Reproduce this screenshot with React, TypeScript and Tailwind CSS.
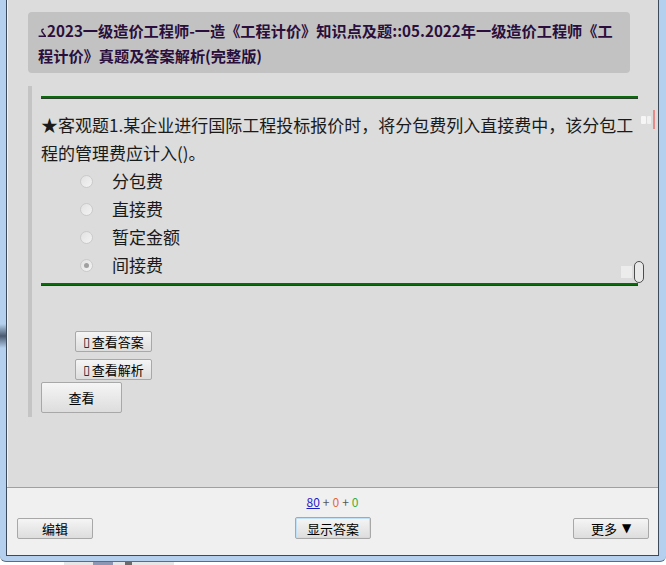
import React from 'react';

const options = [
  { label: '分包费', checked: false },
  { label: '直接费', checked: false },
  { label: '暂定金额', checked: false },
  { label: '间接费', checked: true },
];

const cjk = "font-['Noto_Sans_CJK_SC','Microsoft_YaHei',sans-serif]";

const winBtn =
  'flex items-center justify-center rounded-[2px] border border-[#a8a8a8] bg-gradient-to-b from-[#f5f5f5] to-[#dddddd] text-[13px] leading-none text-black';

const Radio: React.FC<{ checked: boolean }> = ({ checked }) => (
  <span className="flex h-[13px] w-[13px] shrink-0 items-center justify-center rounded-full border border-[#cacaca] bg-gradient-to-br from-[#e2e2e2] to-[#f3f3f3]">
    {checked && <span className="h-[5px] w-[5px] rounded-full bg-[#a0a0a0]" />}
  </span>
);

const GreenRule: React.FC = () => (
  <div className="w-[597px] border-t-2 border-b border-t-[#0b6a0b] border-b-[#2b3d2b]" />
);

const App: React.FC = () => {
  return (
    <div className={`relative flex h-[565px] w-[666px] flex-col overflow-hidden bg-white ${cjk}`}>
      {/* window frame */}
      <div className="flex h-[562px] flex-col rounded-b-[6px] border-b border-[#5d6b7d] bg-[#b4d0ee] pl-[6px] pr-[7px] pb-[5px]">
        <div className="flex flex-1 flex-col border-x border-b border-[#3d4a5a] bg-[#dcdcdc] shadow-[inset_1px_0_0_#eef3f9]">
          {/* main area */}
          <div className="flex h-[487px] flex-col pt-[12px]">
            <div className="ml-[21px] h-[61px] w-[602px] rounded-[4px] bg-[#c2c2c2] pl-[10px] pr-[10px] pt-[6px]">
              <p className="text-[15.2px] font-bold leading-[25px] text-[#2a0e3c]">
                <svg width="8" height="9" viewBox="0 0 8 9" className="mr-[1px] inline-block align-baseline">
                  <path d="M0.6 8.2 H7.4 L4 3.6 Q3.4 1 5.8 1.2" fill="none" stroke="#2a0e3c" strokeWidth="1.4" />
                </svg>
                2023一级造价工程师-一造《工程计价》知识点及题::05.2022年一级造价工程师《工程计价》真题及答案解析(完整版)
              </p>
            </div>

            <div className="ml-[21px] mt-[13px] flex h-[331px] border-l-4 border-[#c4c4c4] pl-[9px] pt-[10px]">
              <div className="flex flex-col">
                <GreenRule />
                <p className="mt-[12px] w-[604px] text-[17px] leading-[28px] text-[#1a1a1a]">
                  ★客观题1.某企业进行国际工程投标报价时，将分包费列入直接费中，该分包工程的管理费应计入()。
                </p>
                <div className="flex flex-col">
                  {options.map((o) => (
                    <div key={o.label} className="flex h-[28px] items-center">
                      <span className="ml-[39px]">
                        <Radio checked={o.checked} />
                      </span>
                      <span className="ml-[19px] text-[17px] text-[#1a1a1a]">{o.label}</span>
                    </div>
                  ))}
                </div>
                <div className="mt-[4px]">
                  <GreenRule />
                </div>
                <button className={`${winBtn} ml-[34px] mt-[45px] h-[21px] w-[77px] gap-[2px]`}>
                  <span className="font-['DejaVu_Sans',sans-serif] text-[12px]">▯</span>查看答案
                </button>
                <button className={`${winBtn} ml-[34px] mt-[7px] h-[21px] w-[77px] gap-[2px]`}>
                  <span className="font-['DejaVu_Sans',sans-serif] text-[12px]">▯</span>查看解析
                </button>
                <button className={`${winBtn} mt-[2px] h-[31px] w-[81px]`}>查看</button>
              </div>
            </div>
          </div>

          {/* footer */}
          <div className="flex flex-1 flex-col border-t border-[#a0a0a0] bg-[#f0f0f0] pt-[7px]">
            <div className="flex h-[14px] items-center justify-center gap-[3px] text-[12px] leading-none">
              <span className="text-[#1c1cc4] underline">80</span>
              <span className="text-[#555]">+</span>
              <span className="text-[#e2683a]">0</span>
              <span className="text-[#555]">+</span>
              <span className="text-[#3cae3c]">0</span>
            </div>
            <div className="mt-[8px] flex items-center justify-between pl-[10px] pr-[9px]">
              <button className={`${winBtn} h-[21px] w-[76px]`}>编辑</button>
              <button className={`${winBtn} h-[22px] w-[76px] border-[#3c7fb1] from-[#eef6fc] to-[#d6e8f6] shadow-[inset_0_0_0_1px_#bfe0f7]`}>
                显示答案
              </button>
              <button className={`${winBtn} h-[21px] w-[76px] gap-[5px]`}>
                更多<span className="font-['DejaVu_Sans',sans-serif] text-[12px]">▼</span>
              </button>
            </div>
          </div>
        </div>
      </div>

      {/* strip of whatever lies below the window */}
      <div className="flex h-[3px] items-stretch">
        <span className="ml-[64px] flex w-[110px] gap-[12px] bg-[#e6e6e6] pl-[29px]">
          <span className="w-[20px] bg-[#8d97b3]" />
          <span className="w-[7px] bg-[#6b6b6b]" />
        </span>
      </div>

      {/* overlays: frame shading and editor handles */}
      <div className="absolute left-0 top-[324px] h-[24px] w-[6px] bg-gradient-to-b from-transparent via-[#4a5a70] to-transparent" />
      <div className="absolute left-[641px] top-[116px] flex h-[8px] w-[10px] gap-[1px]">
        <span className="flex-1 rounded-[1px] bg-[#f6f6f6]" />
        <span className="flex-1 rounded-[1px] bg-[#f1f1f1]" />
      </div>
      <div className="absolute left-[653px] top-[110px] h-[19px] w-[2px] bg-[#e88a8a]" />
      <div className="absolute left-[621px] top-[266px] h-[12px] w-[11px] bg-[#ececec]" />
      <div className="absolute left-[634px] top-[261px] h-[22px] w-[10px] rounded-full border border-[#4d4d4d] bg-[#e9e9e9]" />
    </div>
  );
};

export default App;
